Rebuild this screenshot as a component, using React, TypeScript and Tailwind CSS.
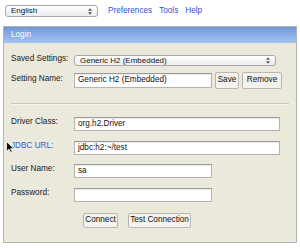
import { ReactNode } from 'react';

const font = { fontFamily: '"Liberation Sans", Arial, sans-serif' };

function Field({ label, children, blue = false, className = '' }: { label: string; children: ReactNode; blue?: boolean; className?: string }) {
    return (
        <div className={`flex items-center ${className}`}>
            <div className={`w-[70px] shrink-0 pl-[7px] pb-[3px] text-[8.2px] ${blue ? 'text-[#3d5bd9]' : 'text-[#222]'}`}>
                {label}
            </div>
            {children}
        </div>
    );
}

function TextBox({ value, width, height = 'h-[14px]' }: { value: string; width: string; height?: string }) {
    return (
        <div className={`${width} ${height} flex items-center bg-white border border-[#b4b4b4] border-t-[#9a9a9a] shadow-[inset_0_1px_1px_rgba(0,0,0,0.08)] pl-[3px] text-[8.2px] text-[#111]`}>
            {value}
        </div>
    );
}

function Button({ children, width }: { children: ReactNode; width: string }) {
    return (
        <div className={`${width} h-full flex items-center justify-center rounded-[2px] border border-[#b8b6ae] bg-[#f3f2ec] text-[8.2px] text-[#111]`}>
            {children}
        </div>
    );
}

function MacSelect({ value, width, height }: { value: string; width: string; height: string }) {
    return (
        <div className={`${width} ${height} flex items-center justify-between rounded-[3px] border border-[#a9a9a9] bg-gradient-to-b from-white to-[#ececec] pl-[5px] pr-[5px] text-[8px] text-[#111]`}>
            <span>{value}</span>
            <svg width="4" height="7" viewBox="0 0 4 7">
                <path d="M0 2.8 L2 0.3 L4 2.8 Z M0 4.2 L2 6.7 L4 4.2 Z" fill="#555" />
            </svg>
        </div>
    );
}

export default function App() {
    return (
        <div className="relative w-[300px] h-[248px] bg-white overflow-hidden" style={font}>
            {/* toolbar */}
            <div className="flex items-center h-[21px] pl-[5px] pt-[1px]">
                <MacSelect value="English" width="w-[93px]" height="h-[12px]" />
                <div className="flex gap-[7px] ml-[10px] text-[8.2px] text-[#2f51d6]">
                    <span>Preferences</span>
                    <span>Tools</span>
                    <span>Help</span>
                </div>
            </div>

            {/* login panel */}
            <div className="ml-[3px] mt-[5px] w-[294px] h-[217px] border border-[#b3b3b3] bg-[#ebe8dc]">
                <div className="h-[16px] flex items-center pl-[7px] bg-gradient-to-b from-[#6f98d8] to-[#a4c3f0] text-white text-[8.2px]">
                    Login
                </div>

                <Field label="Saved Settings:" className="mt-[12px] h-[11px]">
                    <MacSelect value="Generic H2 (Embedded)" width="w-[202px]" height="h-[11px]" />
                </Field>

                <Field label="Setting Name:" className="mt-[6px] h-[17px]">
                    <TextBox value="Generic H2 (Embedded)" width="w-[138px]" height="h-[15px]" />
                    <div className="flex h-[17px] gap-[3px] ml-[3px]">
                        <Button width="w-[24px]">Save</Button>
                        <Button width="w-[40px]">Remove</Button>
                    </div>
                </Field>

                <div className="mt-[14px] mx-[7px] h-px bg-[#c9c6ba] border-b border-[#f7f6f0] box-content" />

                <Field label="Driver Class:" className="mt-[12px] h-[14px]">
                    <TextBox value="org.h2.Driver" width="w-[206px]" />
                </Field>
                <Field label="JDBC URL:" blue className="mt-[10px] h-[14px]">
                    <TextBox value="jdbc:h2:~/test" width="w-[206px]" />
                </Field>
                <Field label="User Name:" className="mt-[9px] h-[14px]">
                    <TextBox value="sa" width="w-[138px]" />
                </Field>
                <Field label="Password:" className="mt-[10px] h-[14px]">
                    <TextBox value="" width="w-[138px]" />
                </Field>

                <div className="flex gap-[10px] ml-[79px] mt-[11px] h-[15px]">
                    <Button width="w-[35px]">Connect</Button>
                    <Button width="w-[63px]">Test Connection</Button>
                </div>
            </div>

            {/* mouse pointer */}
            <svg className="absolute left-[6px] top-[141px]" width="9" height="13" viewBox="0 0 9 13">
                <path d="M0.5 0.5 L0.5 10.5 L3 8.2 L4.8 12 L6.3 11.3 L4.6 7.7 L8 7.7 Z" fill="#111" stroke="#fff" strokeWidth="0.8" />
            </svg>
        </div>
    );
}
